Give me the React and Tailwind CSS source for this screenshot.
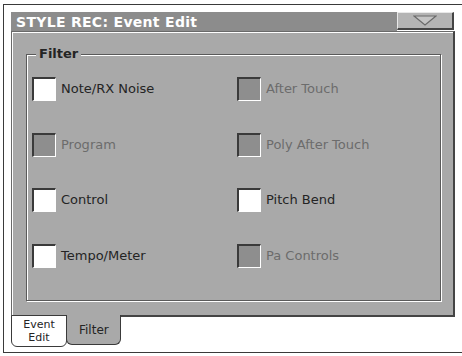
import React from 'react'

const items = [
    ['Note/RX Noise', true],
    ['After Touch', false],
    ['Program', false],
    ['Poly After Touch', false],
    ['Control', true],
    ['Pitch Bend', true],
    ['Tempo/Meter', true],
    ['Pa Controls', false],
]

function Check({ label, enabled }) {
    return (
        <div className="flex items-center h-[24px]">
            <div
                className={
                    'w-[24px] h-[24px] border-t-2 border-l-2 border-b border-r border-t-[#3a3a3a] border-l-[#3a3a3a] border-b-white border-r-white ' +
                    (enabled ? 'bg-white' : 'bg-[#8e8e8e]')
                }
            />
            <span className={'ml-[5px] text-[13px] ' + (enabled ? 'text-[#242424]' : 'text-[#6c6c6c]')}>
                {label}
            </span>
        </div>
    )
}

export default function App() {
    return (
        <div
            className="w-[462px] h-[356px] bg-white overflow-hidden"
            style={{ fontFamily: '"DejaVu Sans", "Liberation Sans", sans-serif' }}
        >
            <div className="ml-[3px] mt-[4px] w-[459px] h-[349px] border-l border-t border-b border-[#3a3a3a] pl-[7px] pt-[7px] flex flex-col">
                {/* title row */}
                <div className="flex h-[19px]">
                    <div className="w-[386px] h-full bg-[#8c8c8c] flex items-center pl-[5px]">
                        <span className="text-white font-bold text-[14px] leading-none tracking-[0.3px]">
                            STYLE REC: Event Edit
                        </span>
                    </div>
                    <div className="w-[57px] h-[18px] bg-[#b4b4b4] border-t border-l border-t-[#e8e8e8] border-l-[#e8e8e8] border-r-2 border-b-2 border-r-[#444] border-b-[#444] flex items-center justify-center">
                        <svg width="24" height="11" viewBox="0 0 24 11">
                            <path d="M1 1 L23 1 L12 10 Z" fill="#c4c4c4" stroke="#6a6a6a" strokeWidth="1.2" />
                        </svg>
                    </div>
                </div>

                {/* main panel */}
                <div className="w-[444px] h-[286px] bg-[#a9a9a9] border-t border-l border-t-[#6a6a6a] border-l-[#6a6a6a] border-r-2 border-b-2 border-r-[#444] border-b-[#444] shadow-[inset_1px_1px_0_#fff] pl-[14px] pt-[22px]">
                    <div className="relative w-[415px] h-[247px] border border-[#5a5a5a] shadow-[inset_1px_1px_0_#fff,1px_1px_0_#fff] pl-[5px] pt-[22px]">
                        <span className="absolute left-[9px] top-[-9px] px-[3px] bg-[#a9a9a9] text-[13px] font-bold text-[#242424] leading-[16px]">
                            Filter
                        </span>
                        <div className="grid grid-cols-[205px_1fr] gap-y-[31.5px]">
                            {items.map(([label, enabled]) => (
                                <Check key={label} label={label} enabled={enabled} />
                            ))}
                        </div>
                    </div>
                </div>

                {/* tabs */}
                <div className="flex -mt-[2px]">
                    <div className="w-[56px] h-[32px] bg-white border border-[#3a3a3a] rounded-b-[6px] flex flex-col items-center justify-center text-[11px] leading-[13px] text-[#242424]">
                        <span>Event</span>
                        <span>Edit</span>
                    </div>
                    <div className="-ml-px w-[55px] h-[30px] bg-[#a9a9a9] border border-t-0 border-[#3a3a3a] rounded-b-[6px] flex items-center pl-[12px] text-[12px] text-[#242424]">
                        Filter
                    </div>
                </div>
            </div>
        </div>
    )
}
